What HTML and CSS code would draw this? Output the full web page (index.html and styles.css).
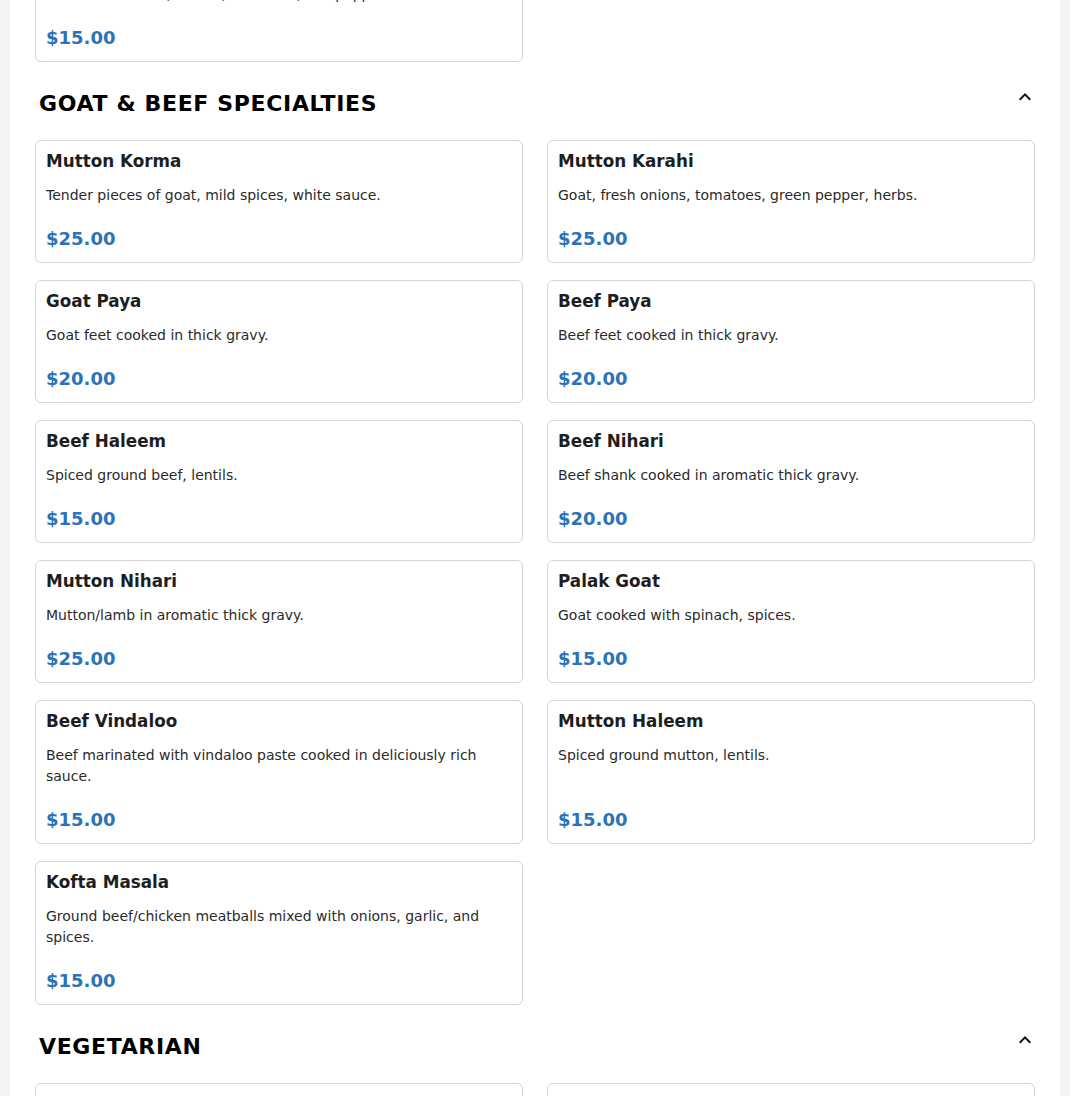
FILE: index.html
```html
<!DOCTYPE html>
<html lang="en">
<head>
<meta charset="utf-8">
<title>Menu</title>
<link rel="stylesheet" href="styles.css">
</head>
<body>
<main class="panel">
  <section class="section">
    <div class="grid">
      <article class="card">
        <h3 class="card-title">Chicken Jalfrezi</h3>
        <p class="card-desc">Boneless chicken, onions, tomatoes, bell peppers.</p>
        <p class="card-price">$15.00</p>
      </article>
    </div>
  </section>

  <section class="section">
    <div class="section-head">
      <h2 class="section-title">GOAT &amp; BEEF SPECIALTIES</h2>
      <svg class="chev" viewBox="0 0 24 24" width="24" height="24"><path d="M12 8l-6 6 1.41 1.41L12 10.83l4.59 4.58L18 14z"/></svg>
    </div>
    <div class="grid">
      <article class="card">
        <h3 class="card-title">Mutton Korma</h3>
        <p class="card-desc">Tender pieces of goat, mild spices, white sauce.</p>
        <p class="card-price">$25.00</p>
      </article>
      <article class="card">
        <h3 class="card-title">Mutton Karahi</h3>
        <p class="card-desc">Goat, fresh onions, tomatoes, green pepper, herbs.</p>
        <p class="card-price">$25.00</p>
      </article>
      <article class="card">
        <h3 class="card-title">Goat Paya</h3>
        <p class="card-desc">Goat feet cooked in thick gravy.</p>
        <p class="card-price">$20.00</p>
      </article>
      <article class="card">
        <h3 class="card-title">Beef Paya</h3>
        <p class="card-desc">Beef feet cooked in thick gravy.</p>
        <p class="card-price">$20.00</p>
      </article>
      <article class="card">
        <h3 class="card-title">Beef Haleem</h3>
        <p class="card-desc">Spiced ground beef, lentils.</p>
        <p class="card-price">$15.00</p>
      </article>
      <article class="card">
        <h3 class="card-title">Beef Nihari</h3>
        <p class="card-desc">Beef shank cooked in aromatic thick gravy.</p>
        <p class="card-price">$20.00</p>
      </article>
      <article class="card">
        <h3 class="card-title">Mutton Nihari</h3>
        <p class="card-desc">Mutton/lamb in aromatic thick gravy.</p>
        <p class="card-price">$25.00</p>
      </article>
      <article class="card">
        <h3 class="card-title">Palak Goat</h3>
        <p class="card-desc">Goat cooked with spinach, spices.</p>
        <p class="card-price">$15.00</p>
      </article>
      <article class="card">
        <h3 class="card-title">Beef Vindaloo</h3>
        <p class="card-desc">Beef marinated with vindaloo paste cooked in deliciously rich sauce.</p>
        <p class="card-price">$15.00</p>
      </article>
      <article class="card">
        <h3 class="card-title">Mutton Haleem</h3>
        <p class="card-desc">Spiced ground mutton, lentils.</p>
        <p class="card-price">$15.00</p>
      </article>
      <article class="card">
        <h3 class="card-title">Kofta Masala</h3>
        <p class="card-desc">Ground beef/chicken meatballs mixed with onions, garlic, and spices.</p>
        <p class="card-price">$15.00</p>
      </article>
    </div>
  </section>

  <section class="section">
    <div class="section-head">
      <h2 class="section-title">VEGETARIAN</h2>
      <svg class="chev" viewBox="0 0 24 24" width="24" height="24"><path d="M12 8l-6 6 1.41 1.41L12 10.83l4.59 4.58L18 14z"/></svg>
    </div>
    <div class="grid">
      <article class="card">
        <h3 class="card-title">Vegetable Mix</h3>
        <p class="card-desc">Mixed seasonal vegetables cooked with spices.</p>
        <p class="card-price">$12.00</p>
      </article>
      <article class="card">
        <h3 class="card-title">Bhindi Masala</h3>
        <p class="card-desc">Okra cooked with onions, tomatoes, spices.</p>
        <p class="card-price">$12.00</p>
      </article>
    </div>
  </section>
</main>
</body>
</html>
```

FILE: styles.css
```css
html, body {
  margin: 0;
  padding: 0;
}

body {
  background: #f4f4f4;
  font-family: "DejaVu Sans", sans-serif;
  color: #222;
}

.panel {
  width: 1000px;
  margin: -61px auto 0;
  padding: 0 25px 40px;
  background: #fff;
}

.section-head {
  display: flex;
  justify-content: space-between;
  align-items: flex-start;
  margin-top: 24px;
  margin-bottom: 18px;
  padding: 0 4px;
}

.section-title {
  margin: 0;
  font-size: 22px;
  line-height: 36px;
  font-weight: bold;
  letter-spacing: 0.65px;
  color: #000;
}

.chev {
  display: block;
  fill: #111;
  margin: -1px -6px 0 0;
}

.grid {
  display: grid;
  grid-template-columns: 1fr 1fr;
  column-gap: 24px;
  row-gap: 17px;
}

.card {
  display: flex;
  flex-direction: column;
  border: 1px solid #d4d4d4;
  border-radius: 6px;
  padding: 10px 10px 13px;
  background: #fff;
}

.card-title {
  margin: 0;
  font-size: 16.8px;
  line-height: 21px;
  font-weight: bold;
  color: #1e1e1e;
}

.card-desc {
  margin: 13px 0 0;
  font-size: 14px;
  line-height: 21px;
  color: #2a2a2a;
}

.card-price {
  margin: auto 0 0;
  padding-top: 22px;
  font-size: 18px;
  line-height: 21px;
  font-weight: bold;
  color: #2b73b8;
}
```
